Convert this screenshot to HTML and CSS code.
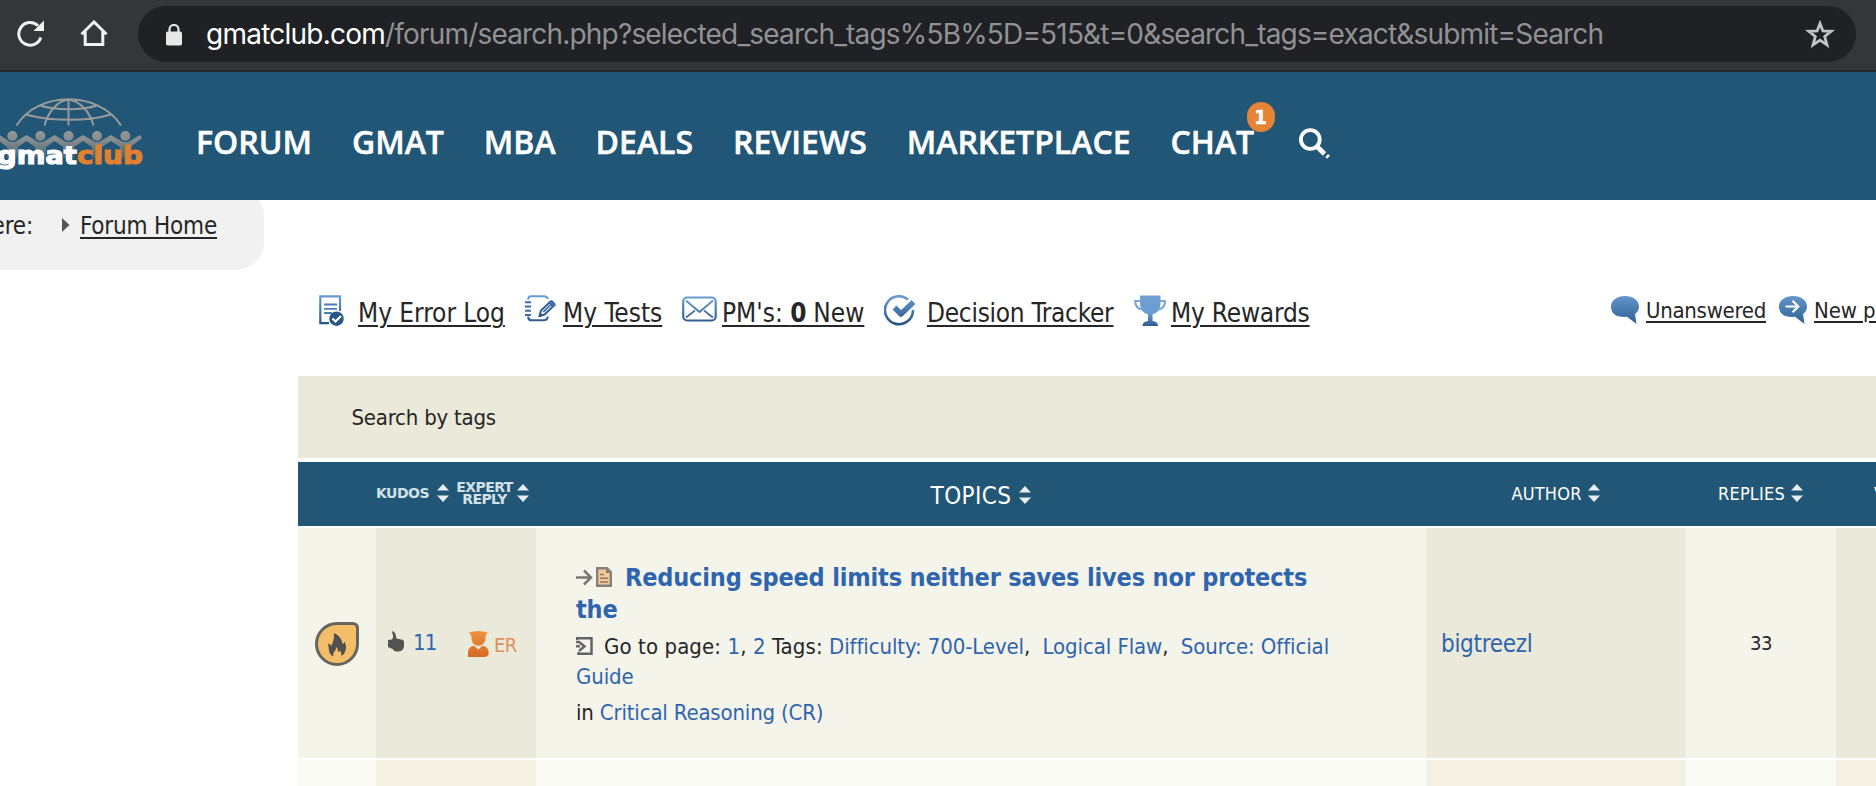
FILE: index.html
```html
<!DOCTYPE html>
<html lang="en">
<head>
<meta charset="utf-8">
<title>GMAT Club Forum - Search by tags</title>
<link rel="stylesheet" href="styles.css">
</head>
<body>
<svg class="defs" width="0" height="0">
  <defs>
    <linearGradient id="blue" gradientUnits="userSpaceOnUse" x1="0" y1="0" x2="0" y2="31">
      <stop offset="0" stop-color="#6b9fd4"/><stop offset="1" stop-color="#235080"/>
    </linearGradient>
    <linearGradient id="cup" gradientUnits="userSpaceOnUse" x1="0" y1="0" x2="0" y2="31">
      <stop offset="0" stop-color="#6f9fd2"/><stop offset=".6" stop-color="#6b9dd1"/><stop offset="1" stop-color="#2d5c92"/>
    </linearGradient>
    <linearGradient id="bubble" gradientUnits="userSpaceOnUse" x1="0" y1="0" x2="0" y2="28">
      <stop offset="0" stop-color="#6496c9"/><stop offset="1" stop-color="#2f5f94"/>
    </linearGradient>
    <linearGradient id="people" gradientUnits="userSpaceOnUse" x1="0" y1="30" x2="0" y2="64">
      <stop offset="0" stop-color="#9c9c9c"/><stop offset=".4" stop-color="#82898c"/><stop offset="1" stop-color="#36596f"/>
    </linearGradient>
    <linearGradient id="expert" gradientUnits="userSpaceOnUse" x1="0" y1="0" x2="0" y2="26">
      <stop offset="0" stop-color="#f0923f"/><stop offset="1" stop-color="#d56a26"/>
    </linearGradient>
    <symbol id="sort" viewBox="0 0 12 18">
      <path d="M0 6.4 6 0l6 6.4zM0 11.600h12L6 18z" fill="#e6eef2"/>
    </symbol>
  </defs>
</svg>

<div class="browser">
  <svg class="reload" width="28" height="28" viewBox="0 0 28 28"><path d="M23.800 17.500A11.300 11.300 0 1 1 21 5.800" fill="none" stroke="#f1f1f2" stroke-width="3"/><path d="M27 .5V11H16.500z" fill="#f1f1f2"/></svg>
  <svg class="home" width="28" height="27" viewBox="0 0 28 27"><path d="M1.500 14.200 14 2l12.500 12.200M5.200 11.500V24.500H22.800V11.500" fill="none" stroke="#f1f1f2" stroke-width="3"/></svg>
  <div class="address">
    <svg class="lock" width="16" height="22" viewBox="0 0 16 22"><path d="M3.500 9V5.500a4.500 4.500 0 0 1 9 0V9" fill="none" stroke="#e8e8e9" stroke-width="2.200"/><rect x="0" y="7.500" width="16" height="14" rx="1.800" fill="#e8e8e9"/></svg>
    <div class="url"><span class="host">gmatclub.com</span><span class="path">/forum/search.php?selected_search_tags%5B%5D=515&amp;t=0&amp;search_tags=exact&amp;submit=Search</span></div>
    <svg class="star" width="30" height="29" viewBox="0 0 30 29"><path d="M15 3.500 17.900 11 26.200 11.300 19.700 16.500 22 25 15 20.100 8 25 10.300 16.500 3.800 11.300 12.100 11z" fill="none" stroke="#c4c4c5" stroke-width="2.800"/></svg>
  </div>
</div>

<div class="header">
  <svg class="logo" width="144" height="76" viewBox="0 0 144 76">
    <g fill="none" stroke="#9b9b9b" stroke-width="1.900">
      <path d="M16.500 27.500C38-7.500 99-7.500 121 27.500M44.500 27.500C48 14 57 3 68.500 1.500C80 3 90 14 93.500 27.500M68.500 1V27.500M40 7.500C56 12.500 82 12.500 97 7.500M25.500 16.500C52 23.500 88 23.500 111 16.500"/>
    </g>
    <g fill="url(#people)">
      <circle cx="12.300" cy="38" r="5"/><circle cx="40.300" cy="38" r="5"/><circle cx="68.500" cy="38" r="5"/><circle cx="97" cy="38" r="5"/><circle cx="125.300" cy="38" r="5"/>
      <path d="M-2 36 10 44H15L26.500 37 38 44H43L54.500 37 66 44H71L83 37 95 44H99L111 37 123 44H128L140 37 142 40 130.500 49V60H120V49L111 43 102 49V60H92V49L83 43 74 49V60H63V49L54.500 43 46 49V60H35V49L26.500 43 18 49V60H7V49L-2 42z"/>
    </g>
    <text class="wordmark" x="-3" y="66.300" textLength="80" lengthAdjust="spacingAndGlyphs" fill="#fff" stroke="#fff">gmat</text>
    <text class="wordmark" x="77" y="66.300" textLength="66" lengthAdjust="spacingAndGlyphs" fill="#e0812f" stroke="#e0812f">club</text>
  </svg>
  <nav class="nav">
    <a>FORUM</a><a>GMAT</a><a>MBA</a><a>DEALS</a><a>REVIEWS</a><a>MARKETPLACE</a><a class="chat">CHAT<span class="badge">1</span></a>
  </nav>
  <svg class="search" width="31" height="31" viewBox="0 0 31 31"><circle cx="11.300" cy="11.500" r="9.400" fill="none" stroke="#fff" stroke-width="3.800"/><path d="M17.500 18 25.500 26" stroke="#fff" stroke-width="4.800"/><path d="M27.200 29.800 30 26.800" stroke="#fff" stroke-width="2.500"/></svg>
</div>

<div class="crumbs">
  <span class="you">You are here:</span>
  <svg class="caret" width="8" height="14" viewBox="0 0 8 14"><path d="M0 0 7.500 7 0 14z" fill="#555"/></svg>
  <a class="link forum-home">Forum Home</a>
</div>

<div class="tools">
  <svg class="i-log" width="25" height="31" viewBox="0 0 25 31"><path d="M10 28.200H1.300V1.300H21V16" fill="none" stroke="url(#blue)" stroke-width="2.200"/><path d="M5 9.500H18M5 13.800H18M5 18H13" fill="none" stroke="#4a7bb2" stroke-width="1.800"/><circle cx="17.500" cy="23.700" r="7.200" fill="#285689"/><path d="M13.500 23.500 16.500 26.500 22 21" fill="none" stroke="#fff" stroke-width="2.200"/></svg>
  <a class="link t-log">My Error Log</a>
  <svg class="i-tests" width="31" height="27" viewBox="0 0 31 27"><path d="M3 4.500Q3.500 1.200 6 1.200H19Q22 1.200 23 4M3 21.500Q3.500 25.300 6 25.300H19Q22 25.300 23 21.500" fill="none" stroke="url(#blue)" stroke-width="2"/><path d="M0 7.200H6M0 11.500H6M0 15.700H6M0 20H6" fill="none" stroke="#3d6ea6" stroke-width="2"/><path d="M14.500 21 16 15.500 24.500 7.500 28 11.500 19.500 19.500z" fill="#fff" stroke="#315f94" stroke-width="2"/><path d="M18.300 17 25.500 10" stroke="#315f94" stroke-width="1.600"/><path d="M23.300 7 25.500 5.200Q27.300 4.500 30 8L31 10.500 28.500 12z" fill="#3f70a8"/><path d="M13.800 22 15 17.500 18.500 20.500z" fill="#285689"/></svg>
  <a class="link t-tests">My Tests</a>
  <svg class="i-pm" width="35" height="26" viewBox="0 0 35 26"><rect x="1.200" y="1.500" width="32.500" height="23" rx="4" fill="none" stroke="url(#blue)" stroke-width="2.200"/><path d="M4 4.500 17.500 16 31 4.500M4 21.500 13 14.500M31 21.500 22 14.500" fill="none" stroke="url(#blue)" stroke-width="1.800"/></svg>
  <a class="link t-pm">PM's: <b>0</b> New</a>
  <svg class="i-track" width="33" height="32" viewBox="0 0 33 32"><path d="M24 4.500A14 14 0 1 0 29 15" fill="none" stroke="url(#blue)" stroke-width="2.600"/><path d="M10.500 12.500 17 19 29.500 7" fill="none" stroke="url(#blue)" stroke-width="5.500" stroke-linejoin="round"/></svg>
  <a class="link t-track">Decision Tracker</a>
  <svg class="i-cup" width="32" height="31" viewBox="0 0 32 31"><path d="M6 .5H26.500V9Q26 17.500 18.500 19.500V26Q24 26.500 24 31H8.500Q8.500 26.500 14 26V19.500Q6.500 17.500 6 9z" fill="url(#cup)"/><path d="M7 6H1.200Q1.500 14 8.500 14.500M25.500 6H31Q30.800 14 24 14.500" fill="none" stroke="#7ca8d8" stroke-width="2.200"/></svg>
  <a class="link t-cup">My Rewards</a>
  <svg class="i-un" width="28" height="28" viewBox="0 0 28 28"><path d="M14 0C22 0 28 4.500 28 10.500Q28 15 24 18L25.500 28 16 20.800Q0 22 0 10.500C0 4.500 6 0 14 0z" fill="url(#bubble)"/></svg>
  <a class="link small t-un">Unanswered</a>
  <svg class="i-new" width="28" height="28" viewBox="0 0 28 28"><path d="M14 0C22 0 28 4.500 28 10.500Q28 15 24 18L25.500 28 16 20.800Q0 22 0 10.500C0 4.500 6 0 14 0z" fill="url(#bubble)"/><path d="M6.500 10.500H19M13.500 4.800 19.300 10.500 13.500 16.200" fill="none" stroke="#fff" stroke-width="2.200"/></svg>
  <a class="link small t-new">New posts</a>
</div>

<div class="results">
  <div class="caption">Search by tags</div>
  <div class="grid head">
    <div></div>
    <div class="h-kudos"><span class="tiny kudos">KUDOS</span><svg class="sort"><use href="#sort"/></svg><span class="tiny expert">EXPERT<br>REPLY</span><svg class="sort"><use href="#sort"/></svg></div>
    <div class="h-topics"><span>TOPICS</span><svg class="sort"><use href="#sort"/></svg></div>
    <div class="h-small"><span>AUTHOR</span><svg class="sort"><use href="#sort"/></svg></div>
    <div class="h-small"><span>REPLIES</span><svg class="sort"><use href="#sort"/></svg></div>
    <div class="h-small views"><span>VIEWS</span></div>
  </div>
  <div class="grid row">
    <div class="c-fire">
      <svg width="46" height="46" viewBox="0 0 46 46"><path d="M23 2.500H38.500Q43.500 2.500 43.500 7.500V23A20.500 20.500 0 1 1 23 2.500z" fill="#f3bd6a" stroke="#66665f" stroke-width="3"/><path d="M20 12C25 14.500 28 18 28.500 23Q30 23 30.300 20.500 33 25 31.500 29.500 30.500 33.500 27.500 35 28 32 26 29.500 25 31 24 31 24.500 28 22.500 26 22 29 20 31 18.500 33 19.500 35.500 15.500 33.500 15 29.500 14.500 25.500 14 22.500 16.500 23 17 25 20.500 20 20 12z" fill="#50504e"/></svg>
    </div>
    <div class="c-kudos shade">
      <svg class="thumb" width="17" height="21" viewBox="0 0 17 21"><path d="M4 .3Q6.500 0 7.500 3L8.500 7.500 13 8.500Q16 8.500 16 11.500V16Q15 20 10.500 20.500H8Q6.500 20.500 4.500 18L0 16V9L4 8.500 5.200 6z" fill="#535351"/></svg>
      <a class="count">11</a>
      <svg class="er-icon" width="21" height="26" viewBox="0 0 21 26"><path d="M1 1.500Q10 -1.500 19.500 1.500L17.500 5V8Q16.500 14.500 10.300 14.700Q4.500 14.500 3.500 8V5z" fill="url(#expert)"/><path d="M0 26V20Q1.500 15.200 6 14.800L10.300 18.500 14.500 14.800Q19 15.200 20.500 20V24Q19 26 17 26z" fill="url(#expert)"/></svg>
      <span class="er">ER</span>
    </div>
    <div class="c-topic">
      <div class="title"><svg class="goto" width="36" height="20" viewBox="0 0 36 20"><path d="M0 10.500H14M8 3.500 15 10.500 8 17.500" fill="none" stroke="#777771" stroke-width="2.500"/><path d="M21.200 1.200H31L34.800 5V18.800H21.200z" fill="#f5c89a" stroke="#85807a" stroke-width="2.400"/><path d="M30 0V6H36z" fill="#85807a"/><path d="M24 7.500H28M24 11.300H32M24 15H32" stroke="#8c7a66" stroke-width="1.600"/></svg><a>Reducing speed limits neither saves lives nor protects<br>the</a></div>
      <div class="meta"><svg class="page" width="17" height="18" viewBox="0 0 17 18"><path d="M1 3V1.300H15.500V16.700H2.500V15" fill="none" stroke="#62626a" stroke-width="2.500"/><path d="M0 5H3L8.500 9.200 3 14M4 9.200H0" fill="none" stroke="#66666a" stroke-width="2.500"/></svg><span class="go">Go to page: <a>1</a>, <a>2</a> Tags: </span><a>Difficulty: 700-Level</a>,&nbsp; <a>Logical Flaw</a>,&nbsp; <a>Source: Official<br>Guide</a></div>
      <div class="in">in <a>Critical Reasoning (CR)</a></div>
    </div>
    <div class="c-author shade"><a>bigtreezl</a></div>
    <div class="c-replies">33</div>
    <div class="shade"></div>
  </div>
  <div class="grid row next">
    <div></div><div class="shade"></div><div></div><div class="shade"></div><div></div><div class="shade"></div>
  </div>
</div>
</body>
</html>
```
FILE: styles.css
```css
* { box-sizing: border-box; }
html, body { margin: 0; }
body {
  width: 1876px;
  height: 786px;
  overflow: hidden;
  background: #fff;
  color: #262626;
  font-family: "DejaVu Sans Condensed", "DejaVu Sans", sans-serif;
  white-space: nowrap;
}
svg { display: block; flex: none; }
.defs { position: absolute; }

/* browser toolbar */
.browser {
  height: 72px;
  padding: 6px 20px 0 17px;
  display: flex;
  align-items: flex-start;
  background: #35363a;
  border-bottom: 2px solid #292828;
}
.reload { margin-top: 14px; }
.home { margin: 14px 0 0 35px; }
.address {
  width: 1718px;
  height: 56px;
  margin-left: 30px;
  padding: 0 21px 0 28px;
  border-radius: 28px;
  background: #202124;
  display: flex;
  align-items: center;
}
.lock { margin-top: 1px; }
.url {
  margin-left: 24px;
  margin-right: auto;
  font: 28px/57px Inter, Roboto, sans-serif;
}
.host { color: #fff; letter-spacing: -.76px; }
.path { color: #919294; letter-spacing: -.82px; }

/* site header */
.header {
  position: relative;
  z-index: 1;
  height: 128px;
  display: flex;
  background: #215676;
}
.logo { margin-top: 26px; }
.wordmark { font: bold 25px "DejaVu Sans", sans-serif; stroke-width: 1.1px; }
.nav {
  margin-left: 52px;
  display: flex;
  gap: 40px;
  color: #fff;
  font: 600 32px/44px "Open Sans", sans-serif;
  -webkit-text-stroke: .5px #fff;
  padding-top: 48px;
}
.chat { position: relative; }
.badge {
  position: absolute;
  left: 76px;
  top: -18px;
  width: 28px;
  height: 30px;
  border-radius: 14px;
  background: #e58337;
  font: bold 20px/30px "DejaVu Sans Condensed", sans-serif;
  text-align: center;
}
.search { margin: 56px 0 0 45px; }

/* breadcrumb */
.crumbs {
  width: 264px;
  height: 82px;
  margin-top: -12px;
  padding-top: 12px;
  border-radius: 0 28px 28px 0;
  background: #f1f1f1;
  display: flex;
  align-items: flex-start;
  font-size: 24px;
  line-height: 53px;
}
.you { width: 33px; display: flex; justify-content: flex-end; letter-spacing: -.2px; }
.caret { margin: 18px 0 0 29px; }
.link {
  text-decoration: underline;
  text-decoration-thickness: 2px;
  text-underline-offset: 3px;
}
.forum-home { margin-left: 10px; letter-spacing: -.2px; }

/* user tools */
.tools {
  height: 106px;
  padding-left: 319px;
  display: flex;
  align-items: flex-start;
  padding-top: 25px;
  overflow: hidden;
  font-size: 26px;
  line-height: 36px;
}
.link b { letter-spacing: -.6px; }
.tools .small { font-size: 22px; line-height: 31px; }
.t-log { width: 146px; margin-left: 14px; letter-spacing: -.05px; }
.i-tests { margin-left: 21px; }
.t-tests { width: 99px; margin-left: 7px; }
.i-pm { margin-left: 20px; margin-top: 1px; }
.t-pm { width: 142px; margin-left: 5px; }
.i-track { margin-left: 20px; }
.t-track { width: 186px; margin-left: 10px; letter-spacing: -.28px; }
.i-cup { margin-left: 21px; }
.t-cup { width: 138px; margin-left: 5px; letter-spacing: -.2px; }
.i-un { margin-left: 302px; margin-top: 1px; }
.t-un { width: 120px; margin-left: 7px; letter-spacing: -.28px; }
.i-new { margin-left: 13px; margin-top: 1px; }
.t-new { margin-left: 7px; letter-spacing: -.1px; }

/* results table */
.results { margin-left: 298px; width: 1578px; overflow: hidden; }
.caption {
  height: 82px;
  margin-bottom: 4px;
  padding-left: 53.5px;
  background: #ebe9da;
  font-size: 22px;
  line-height: 84px;
  letter-spacing: -.23px;
}
.grid { display: grid; grid-template-columns: 78px 160px 890px 260px 150px 120px; }
.head { height: 64px; margin-bottom: 2px; background: #215676; color: #fff; }
.head > div { display: flex; }
.sort { width: 12px; height: 18px; margin-top: 22px; }
.tiny { font: bold 14px/12px "DejaVu Sans", sans-serif; color: #d3e1e9; }
.kudos { width: 61px; padding-top: 25px; letter-spacing: -.5px; }
.expert { width: 68px; padding: 19px 0 0 3px; letter-spacing: -.6px; text-align: center; }
.h-topics { justify-content: center; font-size: 24px; line-height: 68px; letter-spacing: .4px; }
.h-topics .sort { margin: 24px 0 0 8px; }
.h-small { justify-content: center; font-size: 18px; line-height: 64px; letter-spacing: .2px; }
.h-small .sort { margin: 22px 1px 0 6px; }
.head .views { justify-content: flex-start; padding-left: 38px; }

.row { height: 230px; margin-bottom: 2px; background: #f5f4ea; }
.row > div { display: flex; align-items: center; }
.shade { background: #ebe9da; }
.next { height: 26px; margin: 0; background: #fafaf5; }
.next .shade { background: #f4f0e3; }
.row a { color: #2f64ae; }
.c-fire { padding: 2px 0 0 16px; }
.c-kudos { padding-left: 12px; font-size: 22px; }
.thumb { margin-top: -4px; }
.count { width: 54px; margin: -1px 0 0 8px; letter-spacing: -.8px; }
.er-icon { margin: 1px 0 0 1px; }
.er { margin: 3px 0 0 5px; color: #dc935f; font-size: 20px; letter-spacing: -.5px; }
.row .c-topic { display: block; padding: 34px 0 0 40px; font-size: 22px; }
.title { font-size: 25px; font-weight: bold; line-height: 32px; letter-spacing: -.16px; }
.goto { display: inline-block; margin-right: 13px; vertical-align: -1px; }
.meta { margin-top: 6px; line-height: 30px; letter-spacing: -.1px; }
.page { display: inline-block; margin-right: 11px; vertical-align: -1px; }
.go { letter-spacing: .1px; }
.in { margin-top: 6px; line-height: 30px; letter-spacing: -.17px; }
.c-author { padding: 2px 0 0 15px; font-size: 24px; letter-spacing: -.3px; }
.c-replies { justify-content: center; font-size: 20px; letter-spacing: -.45px; }
```
